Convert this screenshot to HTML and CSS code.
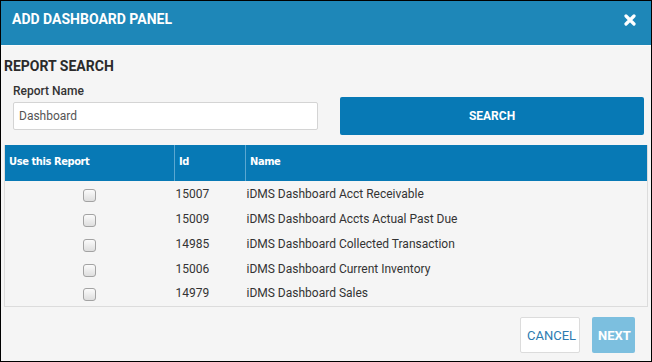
FILE: index.html
```html
<html>
<head>
    <title>Add Dashboard Panel</title>
    <link rel="stylesheet" href="styles.css">
</head>
<body>
<div class="modal">
    <div class="modalHeader">
        <span class="modalTitle">ADD DASHBOARD PANEL</span>
        <svg class="closeIcon" width="12" height="12" viewBox="0 0 12 12">
            <path d="M2 2 L10 10 M10 2 L2 10" stroke="#fff" stroke-width="3.2" stroke-linecap="round"/>
        </svg>
    </div>

    <div class="modalBody">
        <div class="sectionTitle">REPORT SEARCH</div>

        <div class="searchRow">
            <div class="field">
                <label class="fieldLabel">Report Name</label>
                <input type="text" class="textInput" value="Dashboard">
            </div>
            <button class="searchBtn">SEARCH</button>
        </div>

        <table class="reportTable">
            <tr>
                <th class="colUse">Use this Report</th>
                <th class="colId">Id</th>
                <th>Name</th>
            </tr>
            <tr>
                <td class="check"><input type="checkbox"></td>
                <td>15007</td>
                <td>iDMS Dashboard Acct Receivable</td>
            </tr>
            <tr>
                <td class="check"><input type="checkbox"></td>
                <td>15009</td>
                <td>iDMS Dashboard Accts Actual Past Due</td>
            </tr>
            <tr>
                <td class="check"><input type="checkbox"></td>
                <td>14985</td>
                <td>iDMS Dashboard Collected Transaction</td>
            </tr>
            <tr>
                <td class="check"><input type="checkbox"></td>
                <td>15006</td>
                <td>iDMS Dashboard Current Inventory</td>
            </tr>
            <tr>
                <td class="check"><input type="checkbox"></td>
                <td>14979</td>
                <td>iDMS Dashboard Sales</td>
            </tr>
        </table>
    </div>

    <div class="modalFooter">
        <button class="cancelBtn">CANCEL</button>
        <button class="nextBtn" disabled>NEXT</button>
    </div>
</div>
</body>
</html>
```

FILE: styles.css
```css
/* Modal shell */
html, body{
    margin: 0;
    padding: 0;
}
body{
    font-family: Roboto, "Liberation Sans", sans-serif;
    background-color: #f5f5f5;
}
.modal{
    width: 650px;
    height: 360px;
    border: 1px solid #000;
    background-color: #f5f5f5;
    display: flex;
    flex-direction: column;
}

.modalHeader{
    height: 44px;
    background-color: #1e87b8;
    border-bottom: 1px solid #fbfbfb;
    display: flex;
    align-items: center;
    justify-content: space-between;
    padding: 0 15px 0 11px;
}
.modalTitle{
    color: #fff;
    font-size: 14px;
    font-weight: bold;
    margin-top: -8px;
}
.closeIcon{
    margin-top: -7px;
}

.modalBody{
    padding: 0 3px;
}
.sectionTitle{
    margin-top: 10px;
    font-size: 14px;
    font-weight: bold;
    line-height: 20px;
    color: #2b2b2b;
}

/* Search form */
.searchRow{
    display: flex;
    align-items: flex-start;
    margin-top: 8px;
}
.field{
    display: flex;
    flex-direction: column;
    margin-left: 9px;
    width: 305px;
}
.fieldLabel{
    font-size: 12px;
    font-weight: 500;
    line-height: 14px;
    color: #333;
}
.textInput{
    margin-top: 4px;
    height: 28px;
    box-sizing: border-box;
    border: 1px solid #d4d4d4;
    border-radius: 2px;
    background: #fff;
    padding: 0 5px;
    font-family: Roboto, sans-serif;
    font-size: 12px;
    color: #555;
}
.searchBtn{
    margin: 13px 4px 0 auto;
    width: 304px;
    height: 38px;
    border: none;
    border-radius: 2px;
    background-color: #0779b5;
    color: #fff;
    font-family: Roboto, sans-serif;
    font-weight: bold;
    font-size: 12px;
}

/* Results table */
.reportTable{
    margin-top: 10px;
    width: 644px;
    border-collapse: collapse;
    border: 1px solid #dcdcdc;
    border-top: none;
    font-size: 12px;
    color: #333;
}
.reportTable th{
    height: 36px;
    background-color: #0779b5;
    color: #fff;
    text-align: left;
    font-family: "DejaVu Sans", Verdana, sans-serif;
    font-stretch: condensed;
    font-size: 11px;
    letter-spacing: -0.4px;
    font-weight: bold;
    padding: 0 4px;
    border-left: 1px solid #5aa7d1;
    box-sizing: border-box;
    vertical-align: middle;
    padding-bottom: 4px;
}
.reportTable th:first-child{
    border-left: none;
}
.colUse{
    width: 170px;
}
.colId{
    width: 71px;
}
.reportTable td{
    height: 25px;
    padding: 0 1px;
    vertical-align: middle;
}
.reportTable td.check{
    text-align: center;
}
.reportTable input[type=checkbox]{
    appearance: none;
    -webkit-appearance: none;
    width: 13px;
    height: 13px;
    margin: 3px 0 0 0;
    border: 1px solid #a3a3a3;
    border-radius: 3px;
    background: linear-gradient(#fbfbfb, #dedede);
    box-sizing: border-box;
}

/* Footer */
.modalFooter{
    margin-top: auto;
    display: flex;
    justify-content: flex-end;
    gap: 12px;
    padding: 0 16px 8px 0;
}
.cancelBtn, .nextBtn{
    height: 36px;
    border-radius: 2px;
    font-family: Roboto, sans-serif;
    font-size: 13px;
}
.cancelBtn{
    width: 60px;
    background: #fff;
    border: 1px solid #dcdcdc;
    color: #2d7bb0;
}
.nextBtn{
    width: 43px;
    background: #7cbfdf;
    border: none;
    color: #fff;
    font-weight: bold;
}
```
